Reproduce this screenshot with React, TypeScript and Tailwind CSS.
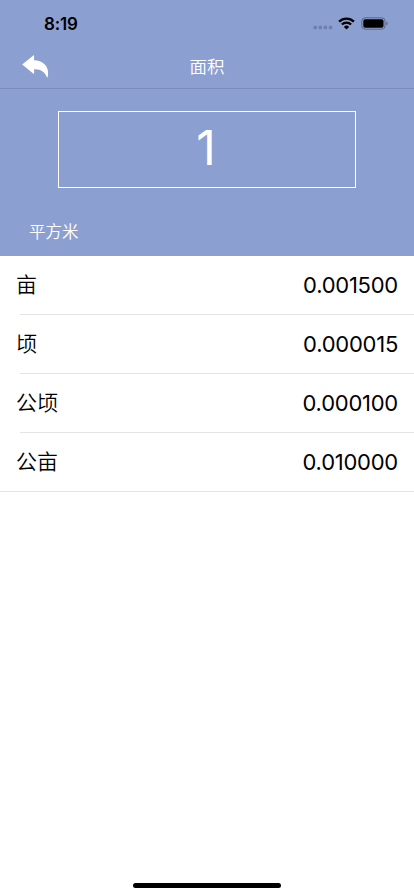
import React, { useState } from "react";

const units = [
  { name: "亩", rate: 0.0015 },
  { name: "顷", rate: 0.000015 },
  { name: "公顷", rate: 0.0001 },
  { name: "公亩", rate: 0.01 },
];

const StatusBar: React.FC = () => (
  <div className="flex h-[44px] items-center justify-between pt-[3px] pr-[26px] pl-[44px] text-black">
    <span className="pt-px text-[17px] leading-none font-semibold tracking-[-0.2px]">8:19</span>
    <div className="flex items-center">
      <svg width="20" height="5" viewBox="0 0 20 5" fill="#7080ad" className="mt-[8px] mr-[5px]">
        <circle cx="2.2" cy="2.5" r="1.9" />
        <circle cx="7.3" cy="2.5" r="1.9" />
        <circle cx="12.4" cy="2.5" r="1.9" />
        <circle cx="17.5" cy="2.5" r="1.9" />
      </svg>
      <svg width="17" height="13" viewBox="0 0 17 13" className="mr-[6px]">
        <path d="M1.1 4.6a10.6 10.6 0 0 1 14.8 0" fill="none" stroke="#000" strokeWidth="2.4" />
        <path d="M3.9 7.5a6.6 6.6 0 0 1 9.2 0" fill="none" stroke="#000" strokeWidth="2.3" />
        <path d="M8.5 12.5 5.9 9.9a3.7 3.7 0 0 1 5.2 0z" fill="#000" />
      </svg>
      <svg width="27" height="13" viewBox="0 0 27 13">
        <rect x="0.8" y="0.8" width="23.2" height="11.4" rx="3.2" fill="none" stroke="#5b6789" />
        <rect x="2.3" y="2.3" width="20.2" height="8.4" rx="1.8" fill="#000" />
        <path d="M25.3 4.6c.9.3 1.3 1 1.3 1.9s-.4 1.6-1.3 1.9z" fill="#5b6789" />
      </svg>
    </div>
  </div>
);

const App: React.FC = () => {
  const [value, setValue] = useState("1");

  return (
    <div className="flex h-[896px] w-[414px] flex-col bg-white font-['Inter','Noto_Sans_CJK_SC',sans-serif]">
      <header className="h-[256px] bg-[#8c9fd1] text-white">
        <StatusBar />
        <nav className="grid h-[45px] grid-cols-3 items-center border-b border-[#7b8cba]">
          <button type="button" className="mt-px ml-[22px] w-[27px]">
            <svg width="27" height="24" viewBox="0 0 27 24" fill="#fff">
              <path d="M0.2 9.6 11.6 0.3Q12.1 0 12.1 0.7V5.3C20.6 5.6 26.1 10.5 26.1 18Q26.1 21 25.2 23C23.2 17.3 18.8 14 12.1 14.3V18.4Q12 19 11.5 18.7Z" />
            </svg>
          </button>
          <h1 className="pt-[2px] text-center text-[17.5px] leading-none font-[350]">面积</h1>
        </nav>
        <div className="mx-[58px] mt-[22px] h-[77px] border border-white">
          <input
            className="h-full w-full bg-transparent pr-[2px] pb-[4px] text-center text-[48px] leading-none outline-none"
            value={value}
            onChange={(e) => setValue(e.target.value)}
          />
        </div>
        <p className="mt-[32px] ml-[29px] text-[16.5px] leading-[24px] font-[350]">平方米</p>
      </header>
      <ul className="text-black">
        {units.map((unit, i) => (
          <li key={unit.name} className="h-[59px]">
            <div className="flex h-[58px] items-center justify-between px-[16px]">
              <span className="pb-px text-[21px] leading-none font-[350]">{unit.name}</span>
              <span className="text-[22px] leading-none tracking-[-0.25px]">{(Number(value) * unit.rate).toFixed(6)}</span>
            </div>
            <div className={i === units.length - 1 ? "h-px bg-[#e4e4e5]" : "ml-[20px] h-px bg-[#e4e4e5]"} />
          </li>
        ))}
      </ul>
      <div className="mx-auto mt-auto mb-[8px] h-[5px] w-[148px] rounded-full bg-black" />
    </div>
  );
};

export default App;
